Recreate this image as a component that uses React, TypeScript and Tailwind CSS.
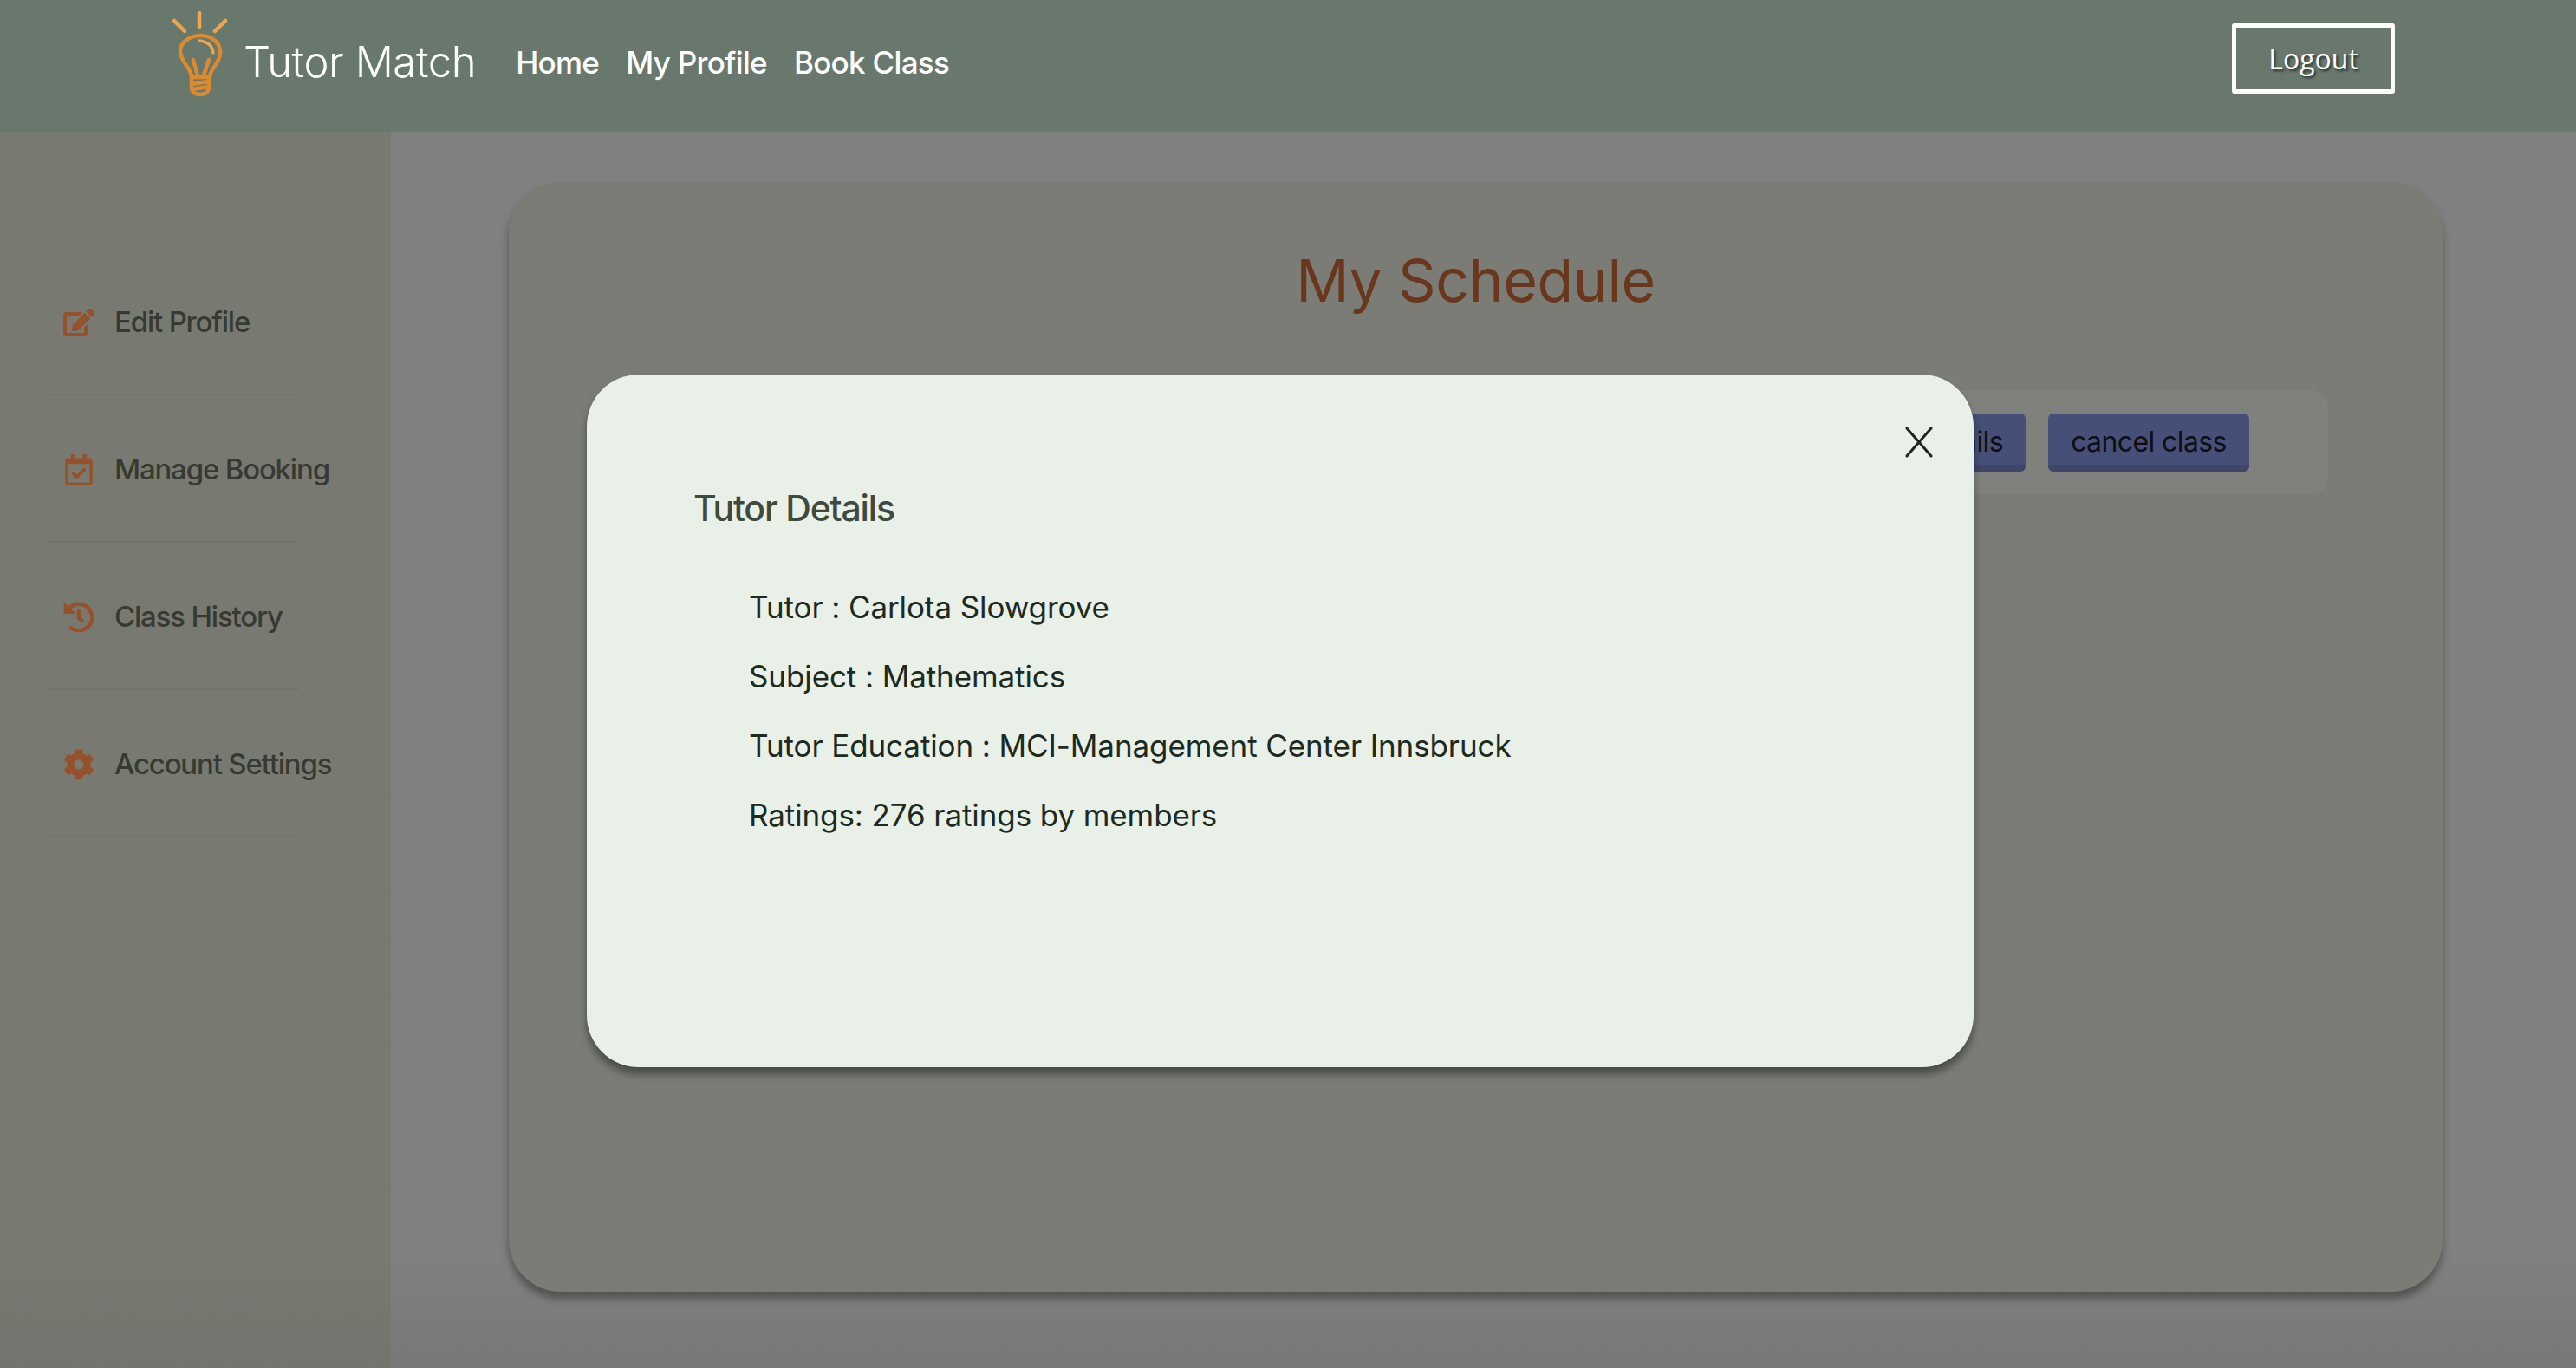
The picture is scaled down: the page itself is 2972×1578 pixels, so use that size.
import { FaEdit, FaRegCalendarCheck, FaHistory, FaCog } from "react-icons/fa";

const FONT = "font-['Inter','Noto_Sans',sans-serif]";

function Bulb() {
  return (
    <svg viewBox="0 0 120 120" className="h-[120px] w-[120px] shrink-0" fill="none" strokeLinecap="round" strokeLinejoin="round">
      {/* rays */}
      <g stroke="#eda64f" strokeWidth="4.5">
        <path d="M60 15V31" />
        <path d="M31 24L43 36" />
        <path d="M90 24L78 36" />
      </g>
      {/* glass */}
      <g stroke="#dd8a2f" strokeWidth="4.5">
        <path d="M51 88C50 78 39 72 38 60C37 50 48 41 61.5 41C75 41 85 50 84 62C83 73 74 78 72 88" />
        <path d="M53 69L58 87" />
        <path d="M71 69L65 87" />
        <path d="M51 89H72" />
        <path d="M51 89V100C51 106 55 109 61 109C67 109 71 106 71 100V89" />
        <path d="M52 97L70 94" />
        <path d="M52 103L70 100" />
      </g>
      <path d="M60 47C69 48 75 52 76 61" stroke="#eda64f" strokeWidth="3.5" />
    </svg>
  );
}

function SideItem({ icon, label }: { icon: React.ReactNode; label: string }) {
  return (
    <a className="flex h-[170px] w-[290px] items-center border-x border-b-2 border-x-[#7a7c75] border-b-[#71736c] pl-[17px] pt-[3px]">
      <span className="flex w-[61px] shrink-0 text-[36px] text-[#97512a]">{icon}</span>
      <span className="ml-[-2px] whitespace-nowrap text-[33px] font-medium tracking-[-1.2px] text-[#363a33]">{label}</span>
    </a>
  );
}

function DetailRow({ children }: { children: React.ReactNode }) {
  return <p className="h-[80px] text-[35px] leading-[80px] tracking-[-0.1px] text-[#1c2a20]">{children}</p>;
}

export default function App() {
  return (
    <div className={`relative flex h-[1578px] w-full flex-col overflow-hidden bg-gradient-to-b from-[#808080] from-[92%] to-[#787878] ${FONT}`}>
      <header className="flex h-[152px] shrink-0 items-center bg-[#69786d] pb-[8px]">
        <div className="ml-[170px] self-start">
          <Bulb />
        </div>
        <span className="ml-[-9px] text-[49px] font-light tracking-[-0.4px] text-white">Tutor Match</span>
        <nav className="ml-[46px] flex gap-[31px] text-[35px] font-medium tracking-[-0.7px] text-white">
          <a>Home</a>
          <a>My Profile</a>
          <a>Book Class</a>
        </nav>
        <button className="ml-auto mr-[209px] mt-[27px] h-[81px] w-[188px] self-start rounded-[3px] border-[5px] border-white font-['Open_Sans',sans-serif] text-[32px] text-white [text-shadow:2px_2px_3px_rgba(0,0,0,0.6)]">
          Logout
        </button>
      </header>

      <div className="flex flex-1">
        <aside className="w-[451px] shrink-0 bg-gradient-to-b from-[#787a72] from-[92%] to-[#72746d] pl-[55px] pt-[134px]">
          <SideItem icon={<FaEdit />} label="Edit Profile" />
          <SideItem icon={<FaRegCalendarCheck />} label="Manage Booking" />
          <SideItem icon={<FaHistory />} label="Class History" />
          <SideItem icon={<FaCog />} label="Account Settings" />
        </aside>

        <main className="flex-1 pl-[136px] pr-[154px] pt-[58px]">
          <div className="flex h-[1280px] flex-col items-center rounded-[60px] bg-[#7a7c75] pt-[68px] shadow-[0_8px_10px_rgba(0,0,0,0.35)]">
            <h1 className="text-[68px] leading-[90px] tracking-[-0.45px] text-[#6a371c]">My Schedule</h1>
            <div className="mr-[132px] mt-[82px] flex h-[120px] w-[2000px] items-center justify-end gap-[26px] self-end rounded-[20px] bg-[#80807d] pr-[91px]">
              <button className="h-[67px] rounded-[6px] border-b-[8px] border-[#3f4668] bg-[#454f78] px-[26px] pt-[8px] text-[32px] tracking-[-0.6px] text-[#0d0f14]">
                view details
              </button>
              <button className="h-[67px] w-[232px] rounded-[6px] border-b-[8px] border-[#3f4668] bg-[#454f78] pt-[8px] text-[32px] tracking-[-0.6px] text-[#0d0f14]">
                cancel class
              </button>
            </div>
          </div>
        </main>
      </div>

      {/* tutor details modal */}
      <div className="absolute left-[677px] top-[432px] h-[799px] w-[1600px] rounded-[60px] bg-[#e8f0e8] pl-[123px] pt-[128px] shadow-[0_8px_10px_rgba(0,0,0,0.4)]">
        <button className="absolute right-[47px] top-[60px] text-[#222]" aria-label="Close">
          <svg viewBox="0 0 32 36" className="h-[36px] w-[32px]" fill="none" stroke="currentColor" strokeWidth="3" strokeLinecap="round">
            <path d="M2 2L30 34M30 2L2 34" />
          </svg>
        </button>
        <h2 className="text-[41px] font-medium leading-[52px] tracking-[-1.2px] text-[#3f4a3f]">Tutor Details</h2>
        <div className="ml-[64px] mt-[48px]">
          <DetailRow>Tutor : Carlota Slowgrove</DetailRow>
          <DetailRow>Subject : Mathematics</DetailRow>
          <DetailRow>Tutor Education : MCI-Management Center Innsbruck</DetailRow>
          <DetailRow>Ratings: 276 ratings by members</DetailRow>
        </div>
      </div>
    </div>
  );
}
